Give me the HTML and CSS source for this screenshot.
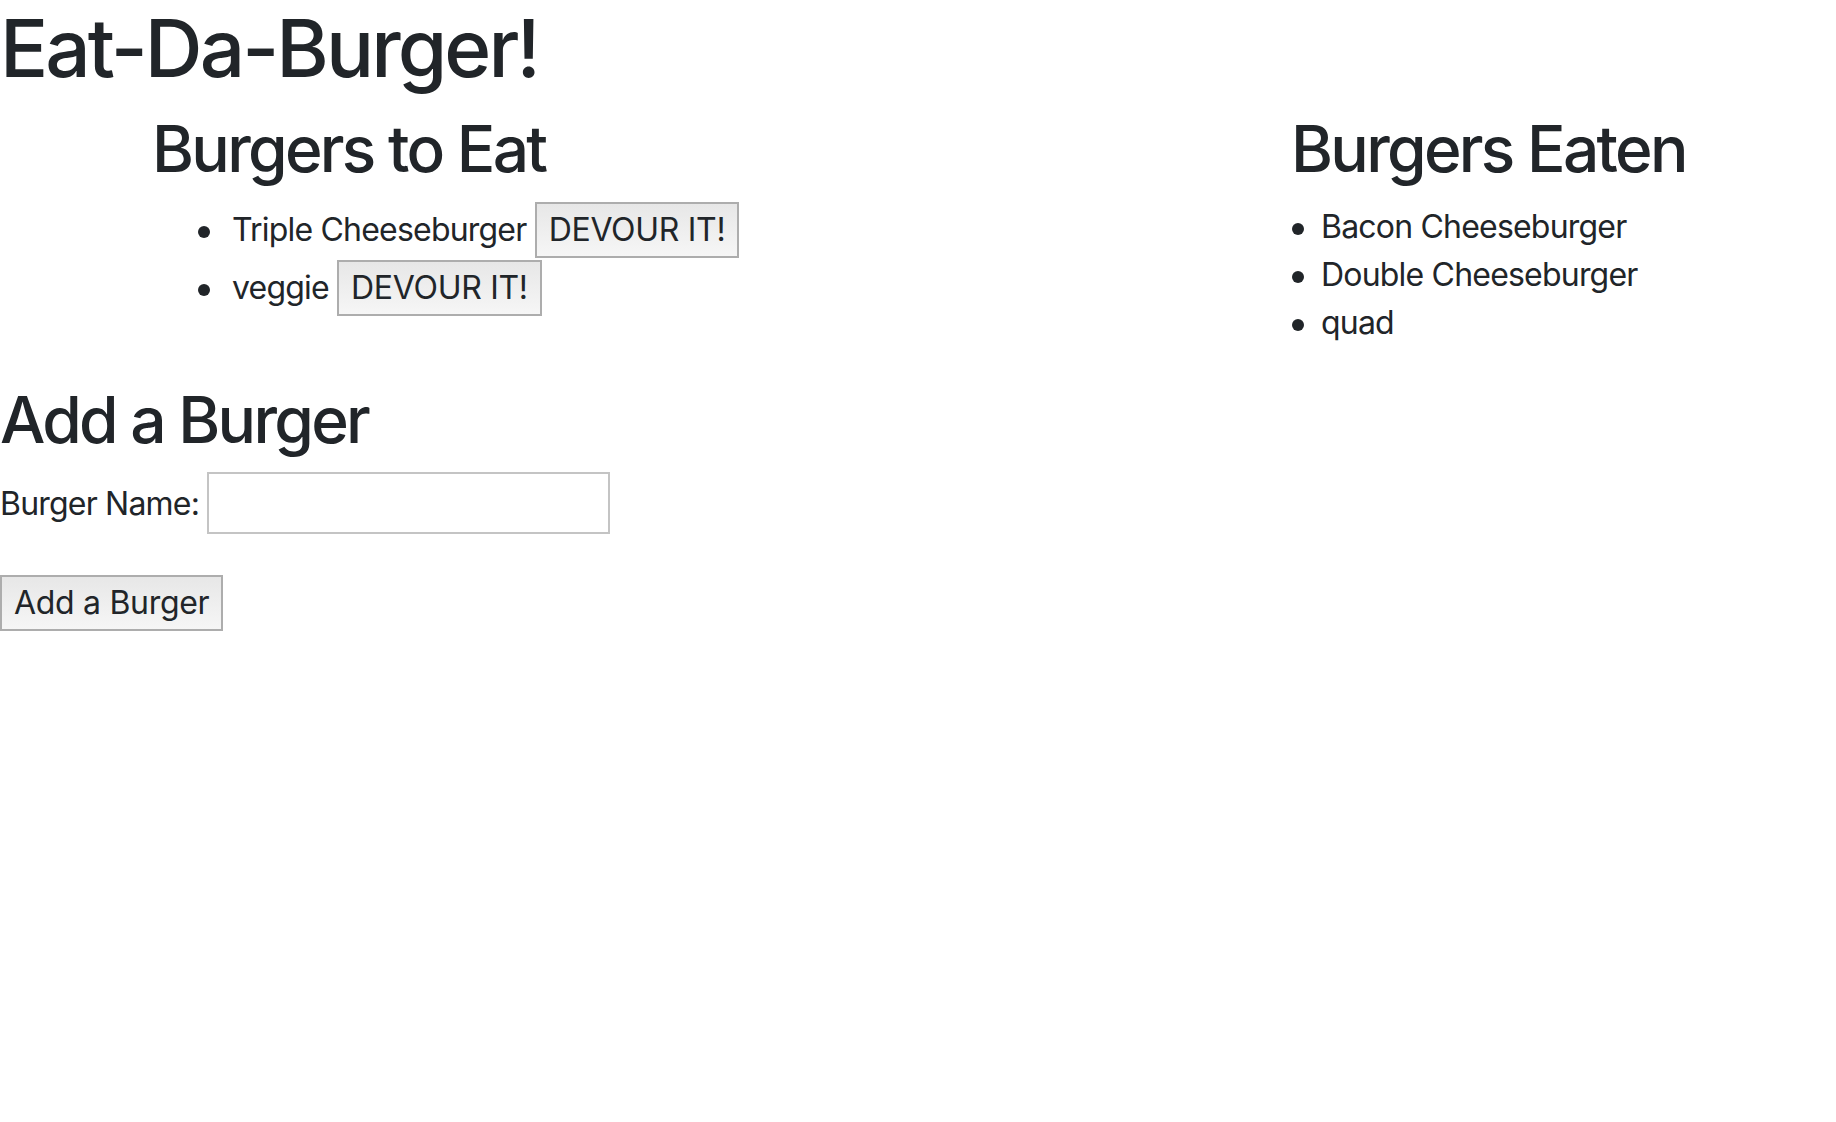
FILE: index.html
```html
<!DOCTYPE html>
<html lang="en">
<head>
<meta charset="utf-8">
<title>Eat-Da-Burger!</title>
<link rel="stylesheet" href="styles.css">
</head>
<body>
<h1 class="title">Eat-Da-Burger!</h1>
<div class="row">
  <div class="col col-left">
    <h2 class="section-title">Burgers to Eat</h2>
    <ul class="list list-to-eat">
      <li>Triple Cheeseburger <button class="btn" type="button">DEVOUR IT!</button></li>
      <li>veggie <button class="btn" type="button">DEVOUR IT!</button></li>
    </ul>
  </div>
  <div class="col col-right">
    <h2 class="section-title">Burgers Eaten</h2>
    <ul class="list list-eaten">
      <li>Bacon Cheeseburger</li>
      <li>Double Cheeseburger</li>
      <li>quad</li>
    </ul>
  </div>
</div>
<h2 class="section-title add-title">Add a Burger</h2>
<form class="add-form">
  <div class="field"><label for="burger-name">Burger Name:</label> <input id="burger-name" class="text-input" type="text"></div>
  <div class="actions"><button class="btn" type="submit">Add a Burger</button></div>
</form>
</body>
</html>
```
FILE: styles.css
```css
html, body {
  margin: 0;
  padding: 0;
  background: #ffffff;
}
body {
  font-family: Inter, "Noto Sans", "Liberation Sans", sans-serif;
  font-size: 32px;
  line-height: 48px;
  color: #212529;
  letter-spacing: -0.8px;
}
.title {
  margin: 0 0 14px 0;
  font-size: 80px;
  line-height: 96px;
  font-weight: 500;
  letter-spacing: -2.9px;
}
.section-title {
  margin: 0 0 16px 0;
  font-size: 64px;
  line-height: 77px;
  font-weight: 500;
  letter-spacing: -2.7px;
}
.row {
  display: flex;
}
.col-left {
  width: 1291px;
  padding-left: 152px;
  box-sizing: border-box;
}
.col-right {
  flex: 1;
}
.list {
  margin: 0 0 34px 0;
  list-style: none;
}
.list li {
  position: relative;
}
.list li::before {
  content: "";
  position: absolute;
  width: 12px;
  height: 12px;
  border-radius: 50%;
  background: #212529;
}
.list-to-eat {
  padding-left: 80px;
  margin-top: -1px;
}
.list-to-eat li {
  padding-bottom: 2px;
}
.list-to-eat li::before {
  left: -34px;
  top: 24px;
}
.list-eaten {
  padding-left: 30px;
}
.list-eaten li::before {
  left: -29px;
  top: 20px;
}
.btn {
  font-family: inherit;
  font-size: 32px;
  line-height: 48px;
  letter-spacing: -0.3px;
  color: #212529;
  padding: 2px 12px;
  border: 2px solid #adadad;
  border-radius: 0;
  background: linear-gradient(#e7e7e7, #f6f6f6);
  margin: 0;
}
.add-title {
  margin-bottom: 14px;
}
.add-form {
  margin: 0;
}
.text-input {
  box-sizing: border-box;
  width: 403px;
  height: 62px;
  padding: 5px 8px;
  border: 2px solid #c4c4c4;
  font-family: inherit;
  font-size: 32px;
  line-height: 48px;
  margin: 0;
  vertical-align: baseline;
}
.actions {
  margin-top: 41px;
}
```
